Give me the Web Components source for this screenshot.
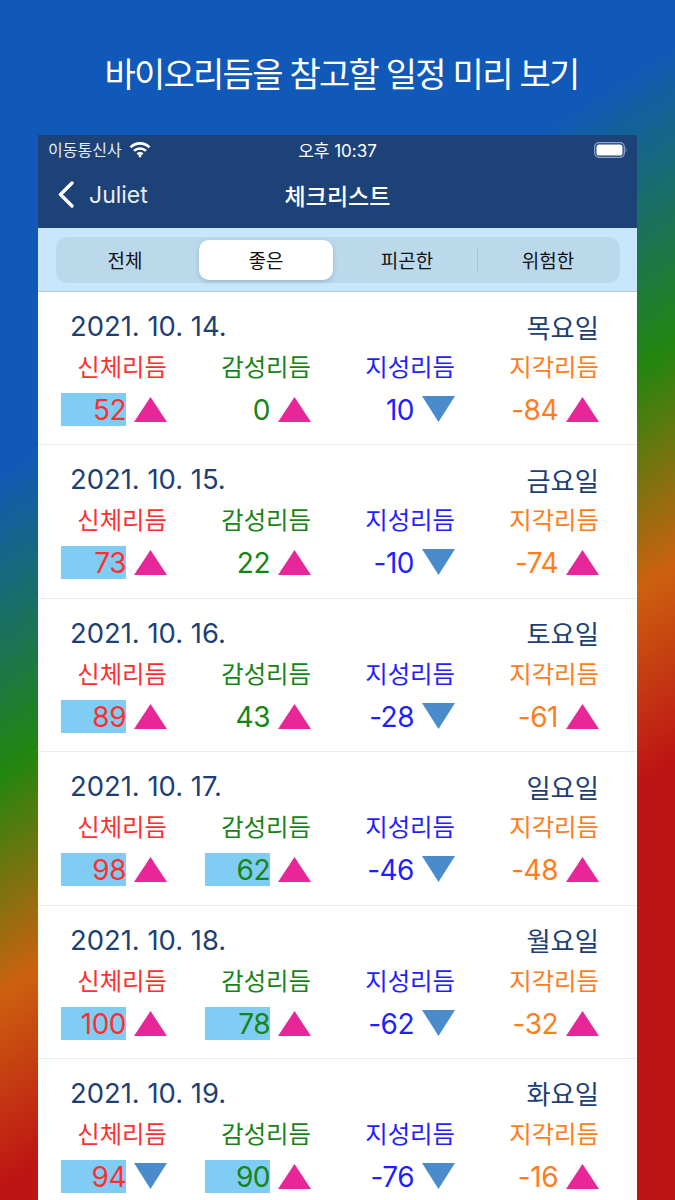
<!DOCTYPE html>
<html lang="ko">
<head>
<meta charset="utf-8">
<style>
  html, body { margin: 0; height: 1200px; overflow: hidden; }
  body { font-family: "Inter", "Noto Sans CJK KR", sans-serif; }
</style>
</head>
<body>
<promo-page heading="바이오리듬을 참고할 일정 미리 보기">
  <status-bar></status-bar>
  <nav-bar back="Juliet" heading="체크리스트"></nav-bar>
  <seg-control selected="1" items="전체,좋은,피곤한,위험한"></seg-control>
  <day-row date="2021. 10. 14." weekday="목요일" values="52u,0u,10d,-84u"></day-row>
  <day-row date="2021. 10. 15." weekday="금요일" values="73u,22u,-10d,-74u"></day-row>
  <day-row date="2021. 10. 16." weekday="토요일" values="89u,43u,-28d,-61u"></day-row>
  <day-row date="2021. 10. 17." weekday="일요일" values="98u,62u,-46d,-48u"></day-row>
  <day-row date="2021. 10. 18." weekday="월요일" values="100u,78u,-62d,-32u"></day-row>
  <day-row date="2021. 10. 19." weekday="화요일" values="94d,90u,-76d,-16u"></day-row>
</promo-page>

<script>
// page background, heading and the phone frame
class PromoPage extends HTMLElement {
  constructor() {
    super();
    this.attachShadow({ mode: 'open' });
    this.shadowRoot.innerHTML = `
      <style>
        :host {
          display: block;
          height: 1200px;
          overflow: hidden;
          background: linear-gradient(147.6deg, #1059b8 0%, #1059b8 29%, #22860f 47.5%, #cc610f 61%, #bd1414 73%, #bd1414 100%);
        }
        h1 {
          margin: 0;
          height: 135px;
          display: flex;
          align-items: center;
          justify-content: center;
          padding: 10px 0 0 8px;
          box-sizing: border-box;
          font: 400 34px "Noto Sans CJK KR", sans-serif;
          letter-spacing: -1.75px;
          color: #fff;
        }
        .phone { margin: 0 38px; background: #fff; }
      </style>
      <h1></h1>
      <div class="phone"><slot></slot></div>
    `;
    this.shadowRoot.querySelector('h1').innerText = this.getAttribute('heading');
  }
}

class StatusBar extends HTMLElement {
  constructor() {
    super();
    this.attachShadow({ mode: 'open' });
    this.shadowRoot.innerHTML = `
      <style>
        :host {
          display: grid;
          grid-template-columns: 1fr auto 1fr;
          align-items: center;
          height: 30px;
          padding: 0 10px 2px 10px;
          box-sizing: border-box;
          background: #1d4278;
          color: #fff;
          font: 400 16px "Inter", "Noto Sans CJK KR", sans-serif;
        }
        .left { display: flex; align-items: center; gap: 7px; color: #e6ecf4; }
        .right { display: flex; justify-content: flex-end; padding-top: 2px; }
        .time { font-size: 17px; }
        svg { display: block; }
      </style>
      <div class="left">
        <span>이동통신사</span>
        <svg width="22" height="17" viewBox="0 0 22 17" fill="none" stroke="#fff" stroke-width="2.6">
          <path d="M1.5 6.2a13.6 13.6 0 0 1 19 0"/>
          <path d="M5 9.9a8.6 8.6 0 0 1 12 0"/>
          <path d="M8.4 13.2a3.9 3.9 0 0 1 5.2 0"/>
          <circle cx="11" cy="15" r="1.4" fill="#fff" stroke="none"/>
        </svg>
      </div>
      <span class="time">오후 10:37</span>
      <div class="right">
        <svg width="33" height="16" viewBox="0 0 33 16">
          <rect x="0.7" y="0.7" width="29.6" height="14.6" rx="4.2" fill="none" stroke="#8ea6c6" stroke-width="1.3"/>
          <rect x="2.5" y="2.5" width="26" height="11" rx="2.6" fill="#fff"/>
          <path d="M31.6 5.6c1 .4 1 4.4 0 4.8z" fill="#8ea6c6"/>
        </svg>
      </div>
    `;
  }
}

class NavBar extends HTMLElement {
  constructor() {
    super();
    this.attachShadow({ mode: 'open' });
    this.shadowRoot.innerHTML = `
      <style>
        :host {
          display: grid;
          grid-template-columns: 1fr auto 1fr;
          align-items: center;
          height: 63px;
          padding: 0 20px 4px 20px;
          box-sizing: border-box;
          background: #1d4278;
          color: #fff;
        }
        .back { display: flex; align-items: center; gap: 15px; font: 400 23px "Inter", sans-serif; color: #e8edf5; }
        .title { font: 500 23px "Noto Sans CJK KR", sans-serif; }
        svg { display: block; }
      </style>
      <div class="back">
        <svg width="16" height="27" viewBox="0 0 16 27" fill="none" stroke="#fff" stroke-width="3.4" stroke-linecap="round" stroke-linejoin="round">
          <path d="M14 2 L2.5 13.5 L14 25"/>
        </svg>
        <span class="name"></span>
      </div>
      <div class="title"></div>
      <div></div>
    `;
    this.shadowRoot.querySelector('.name').innerText = this.getAttribute('back');
    this.shadowRoot.querySelector('.title').innerText = this.getAttribute('heading');
  }
}

class SegControl extends HTMLElement {
  constructor() {
    super();
    this.attachShadow({ mode: 'open' });
    this.shadowRoot.innerHTML = `
      <style>
        :host {
          display: block;
          height: 64px;
          padding: 9px 17px 0 18px;
          box-sizing: border-box;
          background: #c9e7fc;
          border-bottom: 1.5px solid #b7cede;
        }
        .track {
          display: grid;
          grid-template-columns: repeat(4, 1fr);
          height: 46px;
          border-radius: 12px;
          background: #bcd9ec;
        }
        .tab {
          display: flex;
          align-items: center;
          justify-content: center;
          position: relative;
          margin: 3px 5px 3px 2px;
          padding-bottom: 2px;
          box-sizing: border-box;
          border-radius: 10px;
          color: #111;
          font: 400 19px "Noto Sans CJK KR", sans-serif;
        }
        .tab.on { background: #fff; box-shadow: 0 2px 5px rgba(40, 70, 100, .22); }
        /* thin line between the last two tabs */
        .tab.line::before {
          content: '';
          position: absolute;
          left: -4px;
          top: 7px;
          bottom: 8px;
          width: 1px;
          background: #a9c5d8;
        }
      </style>
      <div class="track"></div>
    `;
    const items = this.getAttribute('items').split(',');
    const selected = Number(this.getAttribute('selected'));
    const track = this.shadowRoot.querySelector('.track');
    items.forEach((item, i) => {
      const tab = document.createElement('div');
      tab.className = 'tab';
      if (i === selected) tab.classList.add('on');
      if (i === 3) tab.classList.add('line');
      tab.innerText = item;
      track.appendChild(tab);
    });
  }
}

// one value with its box and its arrow
class RhythmCell extends HTMLElement {
  constructor() {
    super();
    this.attachShadow({ mode: 'open' });
    this.shadowRoot.innerHTML = `
      <style>
        :host { display: flex; flex-direction: column; align-items: flex-end; color: var(--tone); }
        .label { font: 400 24.4px/34px "Noto Sans CJK KR", sans-serif; height: 34px; }
        .bottom { display: flex; align-items: center; gap: 8px; margin-top: 10px; }
        .value {
          width: 65px;
          height: 33px;
          text-align: right;
          font: 400 28px/35px "Inter", sans-serif;
          letter-spacing: -.5px;
        }
        .value.high { background: #7fcdf5; }
        svg { display: block; }
      </style>
      <div class="label"></div>
      <div class="bottom">
        <div class="value"></div>
        <svg width="33" height="27" viewBox="0 0 33 27"></svg>
      </div>
    `;
  }

  // attributes are set after createElement, so read them here
  connectedCallback() {
    const value = this.getAttribute('value');
    const box = this.shadowRoot.querySelector('.value');
    this.shadowRoot.querySelector('.label').innerText = this.getAttribute('label');
    box.innerText = value;
    if (Number(value) > 50) box.classList.add('high');
    this.shadowRoot.querySelector('svg').innerHTML = this.getAttribute('dir') === 'u'
      ? '<polygon points="16.5,1 33,26 0,26" fill="#e9259a"/>'
      : '<polygon points="0,0 33,0 16.5,26" fill="#4a8ccb"/>';
  }
}

const RHYTHMS = [
  ['신체리듬', '#ff2f2f'],
  ['감성리듬', '#168416'],
  ['지성리듬', '#1f1fff'],
  ['지각리듬', '#ff7d1c'],
];

class DayRow extends HTMLElement {
  constructor() {
    super();
    this.attachShadow({ mode: 'open' });
    this.shadowRoot.innerHTML = `
      <style>
        :host {
          display: block;
          height: 153.4px;
          box-sizing: border-box;
          padding: 15px 38px 0 23px;
          background: #fff;
          border-bottom: 1.5px solid #ececec;
        }
        .top {
          display: flex;
          justify-content: space-between;
          align-items: center;
          height: 38px;
          padding-left: 9px;
          color: #1d3f73;
          font: 400 27.4px "Inter", "Noto Sans CJK KR", sans-serif;
        }
        .week { font: 400 26.3px "Noto Sans CJK KR", sans-serif; }
        .cells {
          display: grid;
          grid-template-columns: repeat(4, 106px);
          justify-content: space-between;
          margin-top: 4px;
        }
      </style>
      <div class="top"><span class="date"></span><span class="week"></span></div>
      <div class="cells"></div>
    `;
    this.shadowRoot.querySelector('.date').innerText = this.getAttribute('date');
    this.shadowRoot.querySelector('.week').innerText = this.getAttribute('weekday');
    const cells = this.shadowRoot.querySelector('.cells');
    this.getAttribute('values').split(',').forEach((v, i) => {
      const cell = document.createElement('rhythm-cell');
      cell.setAttribute('label', RHYTHMS[i][0]);
      cell.setAttribute('value', v.slice(0, -1));
      cell.setAttribute('dir', v.slice(-1));
      cell.style.setProperty('--tone', RHYTHMS[i][1]);
      cells.appendChild(cell);
    });
  }
}

customElements.define('promo-page', PromoPage);
customElements.define('status-bar', StatusBar);
customElements.define('nav-bar', NavBar);
customElements.define('seg-control', SegControl);
customElements.define('rhythm-cell', RhythmCell);
customElements.define('day-row', DayRow);
</script>
</body>
</html>
